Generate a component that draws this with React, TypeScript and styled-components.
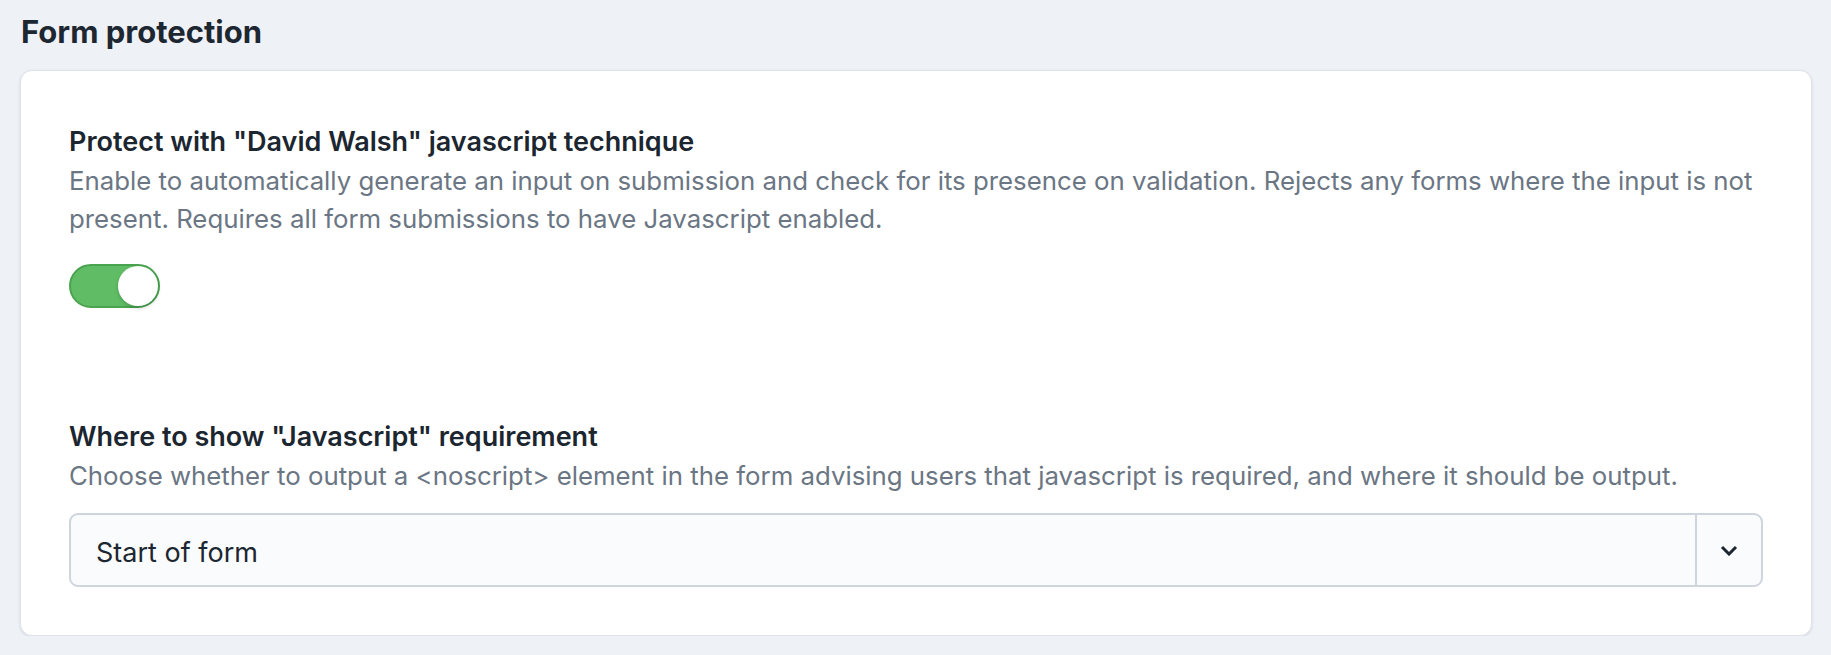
import React, { useState } from "react";
import styled, { createGlobalStyle } from "styled-components";

const GlobalStyle = createGlobalStyle`
  body {
    margin: 0;
    background: #eef1f6;
    font-family: Inter, "Noto Sans", sans-serif;
    color: #1f2a35;
  }
`;

const Page = styled.div`
  padding: 14px 19px 0 20px;
`;

const Heading = styled.h2`
  margin: 0 0 21px 1px;
  font-size: 31px;
  line-height: 35px;
  font-weight: 700;
  color: #1d2731;
`;

const Card = styled.div`
  background: #fff;
  border: 1px solid #dfe3ea;
  border-radius: 12px;
  box-shadow: 0 1px 3px rgba(30, 45, 65, 0.12);
  padding: 55px 48px 48px;
`;

const Field = styled.div<{ $gap?: number }>`
  margin-top: ${(p) => p.$gap ?? 0}px;
`;

const Label = styled.div`
  font-size: 27px;
  line-height: 32px;
  font-weight: 600;
  color: #1c2630;
`;

const Instructions = styled.div`
  margin-top: 4px;
  font-size: 25.8px;
  line-height: 38px;
  color: #6b7684;
`;

const Toggle = styled.button<{ $on: boolean }>`
  display: block;
  margin-top: 26px;
  width: 91px;
  height: 44px;
  padding: 0;
  border-radius: 22px;
  border: 2px solid ${(p) => (p.$on ? "#4aa34f" : "#b5bdc7")};
  background: ${(p) => (p.$on ? "#60bd65" : "#d2d8e0")};
  position: relative;
  cursor: pointer;
`;

const Knob = styled.span<{ $on: boolean }>`
  position: absolute;
  top: 0;
  left: ${(p) => (p.$on ? "47px" : "0")};
  width: 40px;
  height: 40px;
  border-radius: 50%;
  background: #fff;
  box-shadow: 0 2px 4px rgba(0, 0, 0, 0.18);
`;

const SelectBox = styled.div`
  margin-top: 18px;
  display: flex;
  height: 74px;
  box-sizing: border-box;
  border: 2px solid #cfd5dd;
  border-radius: 9px;
  background: #fafbfd;
  overflow: hidden;
`;

const SelectValue = styled.div`
  flex: 1;
  display: flex;
  align-items: center;
  padding: 4px 0 0 25px;
  font-size: 27px;
  color: #1c2630;
`;

const SelectButton = styled.div`
  width: 64px;
  border-left: 2px solid #cfd5dd;
  display: flex;
  align-items: center;
  justify-content: center;
`;

export default function App() {
  const [on, setOn] = useState(true);

  return (
    <Page>
      <GlobalStyle />
      <Heading>Form protection</Heading>
      <Card>
        <Field>
          <Label>Protect with "David Walsh" javascript technique</Label>
          <Instructions>
            Enable to automatically generate an input on submission and check
            for its presence on validation. Rejects any forms where the input
            is not present. Requires all form submissions to have Javascript
            enabled.
          </Instructions>
          <Toggle $on={on} onClick={() => setOn(!on)}>
            <Knob $on={on} />
          </Toggle>
        </Field>
        <Field $gap={113}>
          <Label>Where to show "Javascript" requirement</Label>
          <Instructions>
            Choose whether to output a &lt;noscript&gt; element in the form
            advising users that javascript is required, and where it should be
            output.
          </Instructions>
          <SelectBox>
            <SelectValue>Start of form</SelectValue>
            <SelectButton>
              <svg width="18" height="11" viewBox="0 0 18 11">
                <path
                  d="M2 2l7 7 7-7"
                  fill="none"
                  stroke="#1c2630"
                  strokeWidth="3"
                />
              </svg>
            </SelectButton>
          </SelectBox>
        </Field>
      </Card>
    </Page>
  );
}
